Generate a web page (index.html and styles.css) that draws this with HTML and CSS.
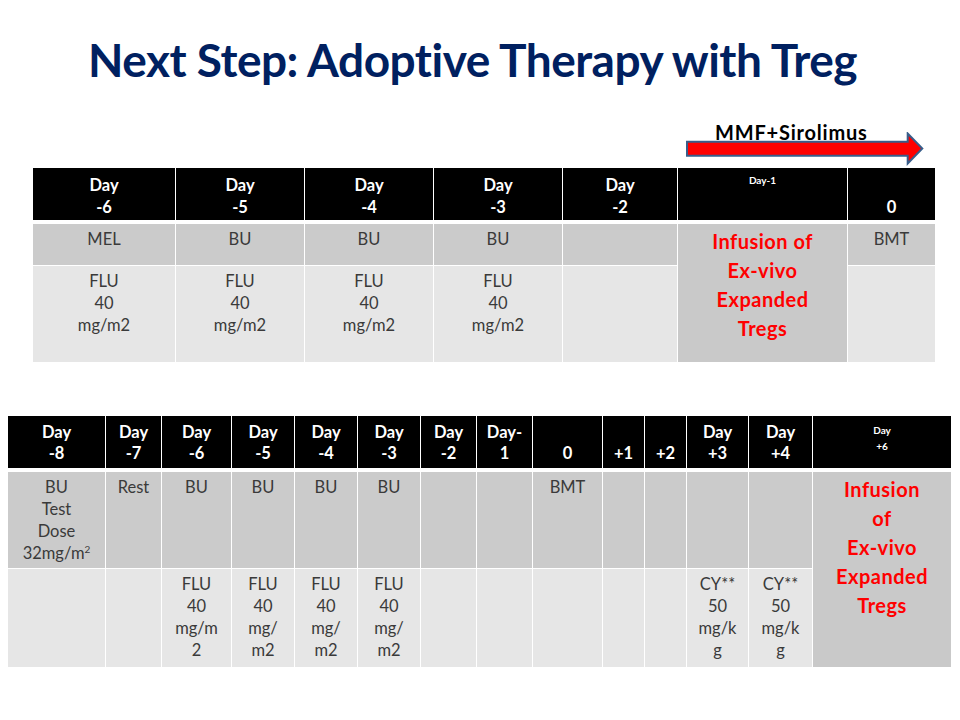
FILE: index.html
```html
<!DOCTYPE html>
<html lang="en">
<head>
<meta charset="utf-8">
<title>Next Step: Adoptive Therapy with Treg</title>
<link rel="stylesheet" href="styles.css">
</head>
<body>
<div class="slide">
  <h1 class="title">Next Step: Adoptive Therapy with Treg</h1>

  <div class="drug">
    <div class="drug-label">MMF+Sirolimus</div>
    <svg class="drug-arrow" width="240" height="34" viewBox="0 0 240 34" aria-hidden="true">
      <path d="M1 9.7 H221.7 V1.5 L236.3 16.5 L221.7 31.5 V23.7 H1 Z" fill="#ff0000" stroke="#385d8a" stroke-width="2" stroke-linejoin="miter"/>
    </svg>
  </div>

  <div class="sched sched-1">
    <div class="h">Day<br>-6</div>
    <div class="h">Day<br>-5</div>
    <div class="h">Day<br>-4</div>
    <div class="h">Day<br>-3</div>
    <div class="h">Day<br>-2</div>
    <div class="h"><div class="tiny tiny-one">Day-1</div><div></div></div>
    <div class="h"><br>0</div>

    <div class="c r2">MEL</div>
    <div class="c r2">BU</div>
    <div class="c r2">BU</div>
    <div class="c r2">BU</div>
    <div class="c r2"></div>
    <div class="c inf">Infusion of<br>Ex-vivo<br>Expanded<br>Tregs</div>
    <div class="c r2">BMT</div>

    <div class="c r3">FLU<br>40<br>mg/m2</div>
    <div class="c r3">FLU<br>40<br>mg/m2</div>
    <div class="c r3">FLU<br>40<br>mg/m2</div>
    <div class="c r3">FLU<br>40<br>mg/m2</div>
    <div class="c r3"></div>
    <div class="c r3"></div>
  </div>

  <div class="sched sched-2">
    <div class="h">Day<br>-8</div>
    <div class="h">Day<br>-7</div>
    <div class="h">Day<br>-6</div>
    <div class="h">Day<br>-5</div>
    <div class="h">Day<br>-4</div>
    <div class="h">Day<br>-3</div>
    <div class="h">Day<br>-2</div>
    <div class="h">Day-<br>1</div>
    <div class="h"><br>0</div>
    <div class="h"><br>+1</div>
    <div class="h"><br>+2</div>
    <div class="h">Day<br>+3</div>
    <div class="h">Day<br>+4</div>
    <div class="h"><div class="tiny tiny-two">Day<br>+6</div></div>

    <div class="c r2">BU<br>Test<br>Dose<br>32mg/m<sup>2</sup></div>
    <div class="c r2">Rest</div>
    <div class="c r2">BU</div>
    <div class="c r2">BU</div>
    <div class="c r2">BU</div>
    <div class="c r2">BU</div>
    <div class="c r2"></div>
    <div class="c r2"></div>
    <div class="c r2">BMT</div>
    <div class="c r2"></div>
    <div class="c r2"></div>
    <div class="c r2"></div>
    <div class="c r2"></div>
    <div class="c inf">Infusion<br>of<br>Ex-vivo<br>Expanded<br>Tregs</div>

    <div class="c r3"></div>
    <div class="c r3"></div>
    <div class="c r3">FLU<br>40<br>mg/m<br>2</div>
    <div class="c r3">FLU<br>40<br>mg/<br>m2</div>
    <div class="c r3">FLU<br>40<br>mg/<br>m2</div>
    <div class="c r3">FLU<br>40<br>mg/<br>m2</div>
    <div class="c r3"></div>
    <div class="c r3"></div>
    <div class="c r3"></div>
    <div class="c r3"></div>
    <div class="c r3"></div>
    <div class="c r3">CY**<br>50<br>mg/k<br>g</div>
    <div class="c r3">CY**<br>50<br>mg/k<br>g</div>
  </div>
</div>
</body>
</html>
```

FILE: styles.css
```css
* {
  box-sizing: border-box;
}

html,
body {
  margin: 0;
  padding: 0;
  background: #ffffff;
}

body {
  width: 960px;
  height: 720px;
  overflow: hidden;
  font-family: Lato, "Open Sans", "Liberation Sans", sans-serif;
  color: #3a3a3a;
}

.slide {
  padding-top: 32px;
}

.title {
  margin: 0 0 0 88px;
  font-size: 46px;
  line-height: 56px;
  font-weight: 700;
  letter-spacing: -0.5px;
  color: #002060;
  white-space: nowrap;
}

.drug {
  margin: 34px 0 0 686px;
  display: flex;
  flex-direction: column;
  align-items: flex-start;
}

.drug-label {
  margin-left: 29px;
  font-size: 20px;
  line-height: 20px;
  font-weight: 700;
  letter-spacing: 0.8px;
  color: #000000;
}

.drug-arrow {
  display: block;
  margin-top: -10px;
}

.sched {
  display: grid;
  gap: 1px;
  background: #ffffff;
  font-size: 16.5px;
}

.sched-1 {
  margin: 2px 0 0 33px;
  grid-template-columns: 142px 128px 128px 128px 114px 169px 87px;
  grid-template-rows: 55px 41px 96px;
}

.sched-2 {
  margin: 54px 0 0 8px;
  grid-template-columns: 97px 55px 69px 62px 62px 62px 55px 55px 69px 41px 41px 61px 63px 138px;
  grid-template-rows: 55px 96px 98px;
}

.h {
  background: #000000;
  color: #ffffff;
  font-weight: 700;
  text-align: center;
  margin-bottom: 3px;
  padding-top: 6px;
  line-height: 22px;
}

.sched-2 .h {
  line-height: 21px;
}

.tiny {
  font-size: 10px;
}

.tiny-one {
  line-height: 12px;
  height: 22px;
}

.tiny-two {
  line-height: 16px;
}

.c {
  text-align: center;
  padding-top: 4px;
  line-height: 22px;
}

.r2 {
  background: #cbcbcb;
}

.r3 {
  background: #e6e6e6;
}

.inf {
  grid-row: span 2;
  background: #c9c9c9;
  color: #ff0000;
  font-weight: 700;
  font-size: 20px;
  letter-spacing: 0.5px;
  line-height: 29px;
  padding-top: 3px;
}

sup {
  font-size: 10px;
  line-height: 0;
  vertical-align: 6px;
}
```
